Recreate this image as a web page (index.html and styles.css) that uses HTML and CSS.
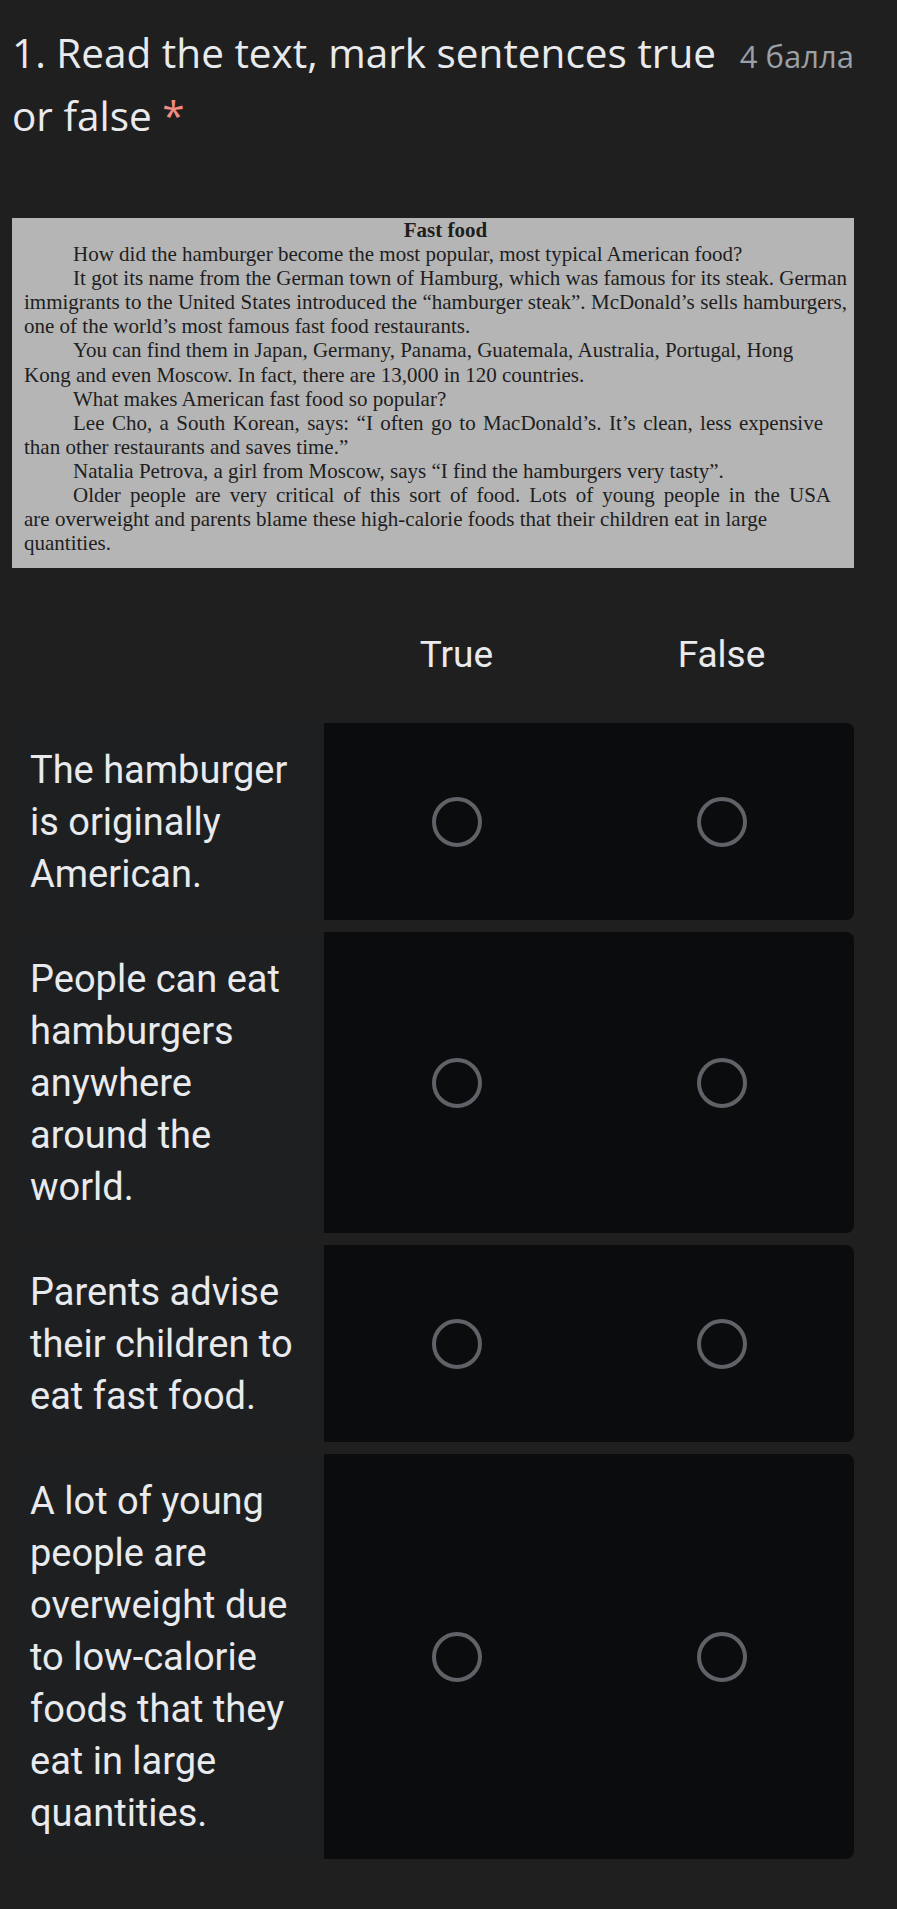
FILE: index.html
```html
<!DOCTYPE html>
<html lang="en">
<head>
<meta charset="utf-8">
<title>Fast food</title>
<link rel="stylesheet" href="styles.css">
</head>
<body>
<main class="page">
  <div class="q-head">
    <h1 class="q-title">1. Read the text, mark sentences true or false <span class="req">*</span></h1>
    <span class="q-points">4 балла</span>
  </div>

  <div class="passage">
    <div class="p-title">Fast food</div>
    <div class="ln ind">How did the hamburger become the most popular, most typical American food?</div>
    <div class="ln ind j">It got its name from the German town of Hamburg, which was famous for its steak. German</div>
    <div class="ln j">immigrants to the United States introduced the “hamburger steak”. McDonald’s sells hamburgers,</div>
    <div class="ln">one of the world’s most famous fast food restaurants.</div>
    <div class="ln ind">You can find them in Japan, Germany, Panama, Guatemala, Australia, Portugal, Hong</div>
    <div class="ln">Kong and even Moscow. In fact, there are 13,000 in 120 countries.</div>
    <div class="ln ind">What makes American fast food so popular?</div>
    <div class="ln ind j j-short">Lee Cho, a South Korean, says: “I often go to MacDonald’s. It’s clean, less expensive</div>
    <div class="ln">than other restaurants and saves time.”</div>
    <div class="ln ind">Natalia Petrova, a girl from Moscow, says “I find the hamburgers very tasty”.</div>
    <div class="ln ind j j-mid">Older people are very critical of this sort of food. Lots of young people in the USA</div>
    <div class="ln">are overweight and parents blame these high-calorie foods that their children eat in large</div>
    <div class="ln">quantities.</div>
  </div>

  <div class="grid-head">
    <span></span>
    <span class="col-title">True</span>
    <span class="col-title">False</span>
  </div>

  <div class="rows">
    <div class="row">
      <div class="row-label">The hamburger is originally American.</div>
      <div class="cell"><span class="radio"></span></div>
      <div class="cell"><span class="radio"></span></div>
    </div>
    <div class="row">
      <div class="row-label">People can eat hamburgers anywhere around the world.</div>
      <div class="cell"><span class="radio"></span></div>
      <div class="cell"><span class="radio"></span></div>
    </div>
    <div class="row">
      <div class="row-label">Parents advise their children to eat fast food.</div>
      <div class="cell"><span class="radio"></span></div>
      <div class="cell"><span class="radio"></span></div>
    </div>
    <div class="row">
      <div class="row-label">A lot of young people are overweight due to low-calorie foods that they eat in large quantities.</div>
      <div class="cell"><span class="radio"></span></div>
      <div class="cell"><span class="radio"></span></div>
    </div>
  </div>
</main>
</body>
</html>
```

FILE: styles.css
```css
* { box-sizing: border-box; }

body {
  margin: 0;
  background: #1f1f1f;
  color: #e8eaed;
  font-family: Roboto, "Noto Sans", sans-serif;
}

.page {
  width: 842px;
  margin-left: 12px;
  padding-top: 21px;
  padding-bottom: 40px;
}

.q-head {
  display: flex;
  align-items: baseline;
  justify-content: space-between;
  gap: 20px;
}

.q-title {
  margin: 0;
  flex: 1;
  font-family: "Open Sans", sans-serif;
  font-weight: 400;
  font-size: 40.5px;
  line-height: 63px;
  color: #e8eaed;
}

.req { color: #f28b82; }

.q-points {
  font-family: "Open Sans", sans-serif;
  font-size: 31px;
  color: #9aa0a6;
  white-space: nowrap;
}

.passage {
  margin-top: 71px;
  height: 350px;
  background: #b5b5b5;
  color: #1e1e1e;
  font-family: "Liberation Serif", "Times New Roman", serif;
  font-size: 21px;
  line-height: 24.1px;
  padding: 0 7px 0 12px;
  overflow: hidden;
}

.p-title {
  font-weight: bold;
  text-align: center;
  padding-left: 20px;
}

.ln { white-space: nowrap; }
.ind { text-indent: 49px; }
.j {
  white-space: normal;
  text-align: justify;
  text-align-last: justify;
}
.j-short { padding-right: 24px; }
.j-mid { padding-right: 16px; }

.grid-head {
  margin-top: 61px;
  display: grid;
  grid-template-columns: 312px 1fr 1fr;
  font-size: 37px;
  line-height: 52px;
}

.col-title { text-align: center; }

.rows {
  margin-top: 42px;
  display: flex;
  flex-direction: column;
  gap: 12px;
}

.row {
  display: grid;
  grid-template-columns: 312px 1fr 1fr;
  background: #0b0c0e;
  border-radius: 0 8px 8px 0;
  overflow: hidden;
}

.row-label {
  background: #1e1f21;
  padding: 20.5px 20px 20.5px 18px;
  font-size: 38px;
  line-height: 52px;
  color: #e8eaed;
}

.cell {
  display: flex;
  align-items: center;
  justify-content: center;
}

.radio {
  width: 50px;
  height: 50px;
  border: 4.5px solid #5f6368;
  border-radius: 50%;
}
```
